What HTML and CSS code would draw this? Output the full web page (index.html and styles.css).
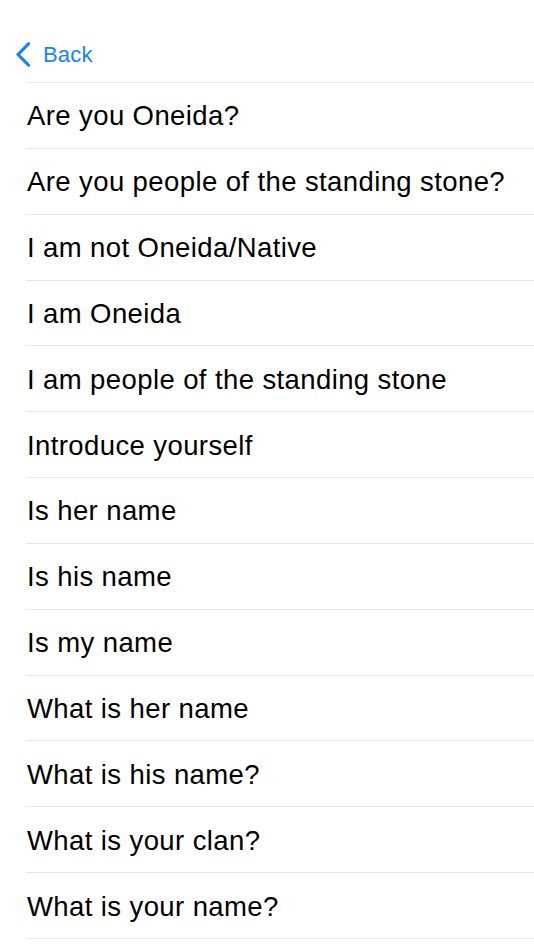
FILE: index.html
```html
<!DOCTYPE html>
<html lang="en">

<head>
    <meta charset="UTF-8" />
    <meta name="viewport" content="width=device-width, initial-scale=1.0" />
    <title>Phrases</title>
    <link rel="stylesheet" href="styles.css">
</head>

<body>
    <div class="nav-bar">
        <a class="back-button" href="#">
            <svg class="back-chevron" width="16" height="25" viewBox="0 0 16 25">
                <path d="M13.5 1.8 L3 12.5 L13.5 23.2" fill="none" stroke="#1a82fb" stroke-width="3.2"
                    stroke-linecap="round" stroke-linejoin="round" />
            </svg>
            <span class="back-label">Back</span>
        </a>
    </div>
    <div class="phrase-list">
        <div class="phrase-row">Are you Oneida?</div>
        <div class="phrase-row">Are you people of the standing stone?</div>
        <div class="phrase-row">I am not Oneida/Native</div>
        <div class="phrase-row">I am Oneida</div>
        <div class="phrase-row">I am people of the standing stone</div>
        <div class="phrase-row">Introduce yourself</div>
        <div class="phrase-row">Is her name</div>
        <div class="phrase-row">Is his name</div>
        <div class="phrase-row">Is my name</div>
        <div class="phrase-row">What is her name</div>
        <div class="phrase-row">What is his name?</div>
        <div class="phrase-row">What is your clan?</div>
        <div class="phrase-row">What is your name?</div>
    </div>
</body>

</html>
```

FILE: styles.css
```css
body {
    margin: 0;
    background-color: #fff;
    font-family: "Liberation Sans", Arial, sans-serif;
    color: #000;
}

.nav-bar {
    height: 82px;
    box-sizing: border-box;
    padding: 42px 0 0 15px;
}

.back-button {
    display: flex;
    align-items: center;
    text-decoration: none;
    color: #1a82fb;
}

.back-chevron {
    display: block;
}

.back-label {
    margin-left: 12px;
    font-size: 22px;
    line-height: 25px;
    letter-spacing: 0.2px;
}

.phrase-list {
    margin-left: 26px;
    border-top: 1px solid #e6e6e6;
}

.phrase-row {
    height: 65.85px;
    box-sizing: border-box;
    border-bottom: 1px solid #e6e6e6;
    padding: 2px 0 0 1px;
    display: flex;
    align-items: center;
    font-size: 27.5px;
    letter-spacing: 0.4px;
    white-space: nowrap;
}
```
